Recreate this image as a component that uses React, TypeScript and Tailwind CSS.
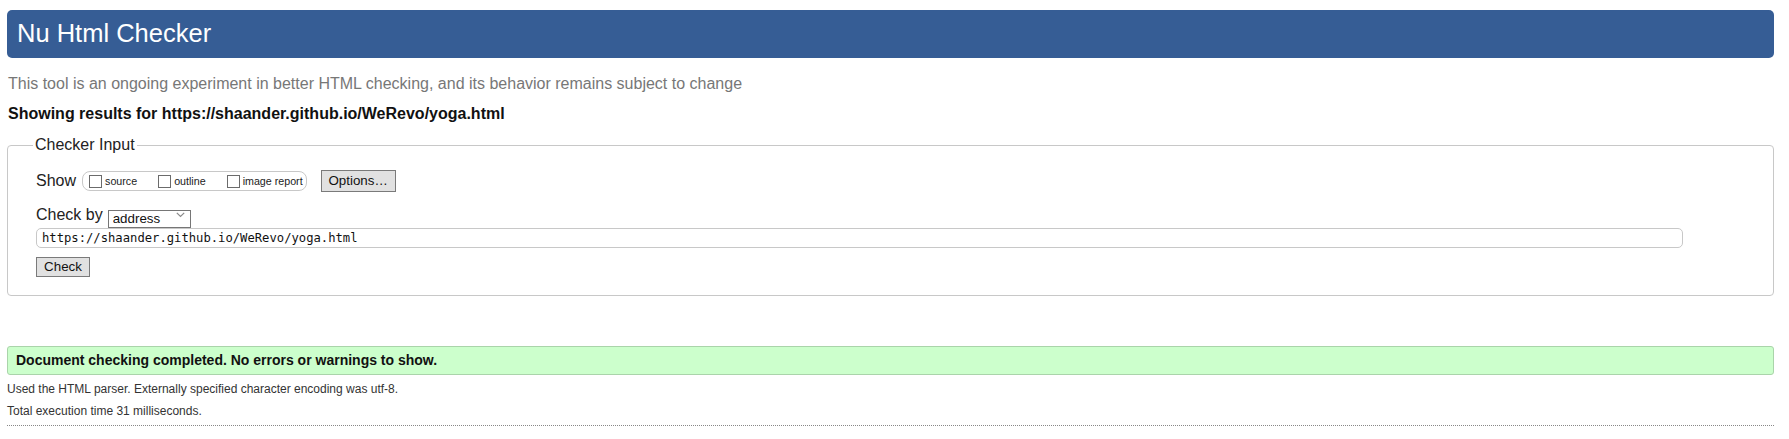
import React from 'react';

const font = "font-['Liberation_Sans',Arial,sans-serif]";

const ShowOption: React.FC<{ label: string; gap?: string }> = ({ label, gap }) => (
    <label className={`flex items-center ${gap ?? ''}`}>
        <input type="checkbox" className="appearance-none m-0 w-[13px] h-[13px] border border-[#6b6b6b] bg-white" />
        <span className="ml-[3px] text-[10.7px] leading-[13px] text-[#222]">{label}</span>
    </label>
);

const App: React.FC = () => {
    return (
        <div className={`${font} bg-white min-h-screen pt-[10px] pl-[7px] pr-[15px] text-[#111]`}>
            <h1 className="h-[48px] rounded-[5px] bg-[#365d95] text-white text-[25.5px] leading-[46px] pl-[10px] font-normal">
                Nu Html Checker
            </h1>

            <p className="mt-[16px] pl-[1px] text-[16px] leading-[20px] text-[#777]">
                This tool is an ongoing experiment in better HTML checking, and its behavior remains subject to change
            </p>
            <p className="mt-[10px] pl-[1px] text-[16px] leading-[20px] font-bold text-[#111]">
                Showing results for https://shaander.github.io/WeRevo/yoga.html
            </p>

            <fieldset className="mt-[11px] border border-[#c8c8c8] rounded-[4px] pl-[28px] pr-[16px] pb-[18px] pt-[15px] m-0">
                <legend className="ml-[-3px] px-[2px] text-[16px] leading-[20px] text-[#222]">Checker Input</legend>

                <div className="flex items-center h-[22px]">
                    <span className="text-[16px] leading-[20px] text-[#222]">Show</span>
                    <div className="ml-[6px] flex items-center h-[20px] border border-[#c8c8c8] rounded-[8px] pl-[6px] pr-[3px]">
                        <ShowOption label="source" />
                        <ShowOption label="outline" gap="ml-[21px]" />
                        <ShowOption label="image report" gap="ml-[21px]" />
                    </div>
                    <button className="ml-[14px] h-[22px] w-[75px] border border-[#7a7a7a] bg-[#e1e1e1] text-[13.33px] text-[#111] leading-[20px]">
                        Options…
                    </button>
                </div>

                <div className="mt-[14px] flex items-center h-[18px]">
                    <span className="text-[16px] leading-[20px] text-[#222]">Check by</span>
                    <div className="relative ml-[5px] w-[83px] h-[18px]">
                        <select className="appearance-none w-full h-full border border-[#767676] bg-white text-[13.33px] leading-[16px] pl-[4px] text-[#111] rounded-none outline-none">
                            <option>address</option>
                        </select>
                        <svg className="absolute right-[6px] top-[6px] pointer-events-none" width="9" height="6" viewBox="0 0 9 6">
                            <path d="M0.8 0.8 L4.5 4.5 L8.2 0.8" fill="none" stroke="#8a8a8a" strokeWidth="1.2" />
                        </svg>
                    </div>
                </div>

                <input
                    readOnly
                    value="https://shaander.github.io/WeRevo/yoga.html"
                    className="mt-[4px] block w-[1647px] h-[20px] border border-[#c8c8c8] rounded-[5px] pl-[5px] font-['DejaVu_Sans_Mono',monospace] text-[12.2px] text-[#111] outline-none"
                />

                <button className="mt-[9px] block h-[20px] w-[54px] border border-[#7a7a7a] bg-[#e1e1e1] text-[13.33px] text-[#111] leading-[18px]">
                    Check
                </button>
            </fieldset>

            <div className="mt-[50px] h-[29px] border border-[#aad4aa] rounded-[3px] bg-[#ccffcc] pl-[8px] text-[14px] leading-[27px] font-bold text-[#111]">
                Document checking completed. No errors or warnings to show.
            </div>

            <p className="mt-[6px] text-[12px] leading-[16px] text-[#333]">
                Used the HTML parser. Externally specified character encoding was utf-8.
            </p>
            <p className="mt-[6px] text-[12px] leading-[16px] text-[#333]">
                Total execution time 31 milliseconds.
            </p>
            <div className="mt-[6px] border-b border-dotted border-[#888]" />
        </div>
    );
};

export default App;
